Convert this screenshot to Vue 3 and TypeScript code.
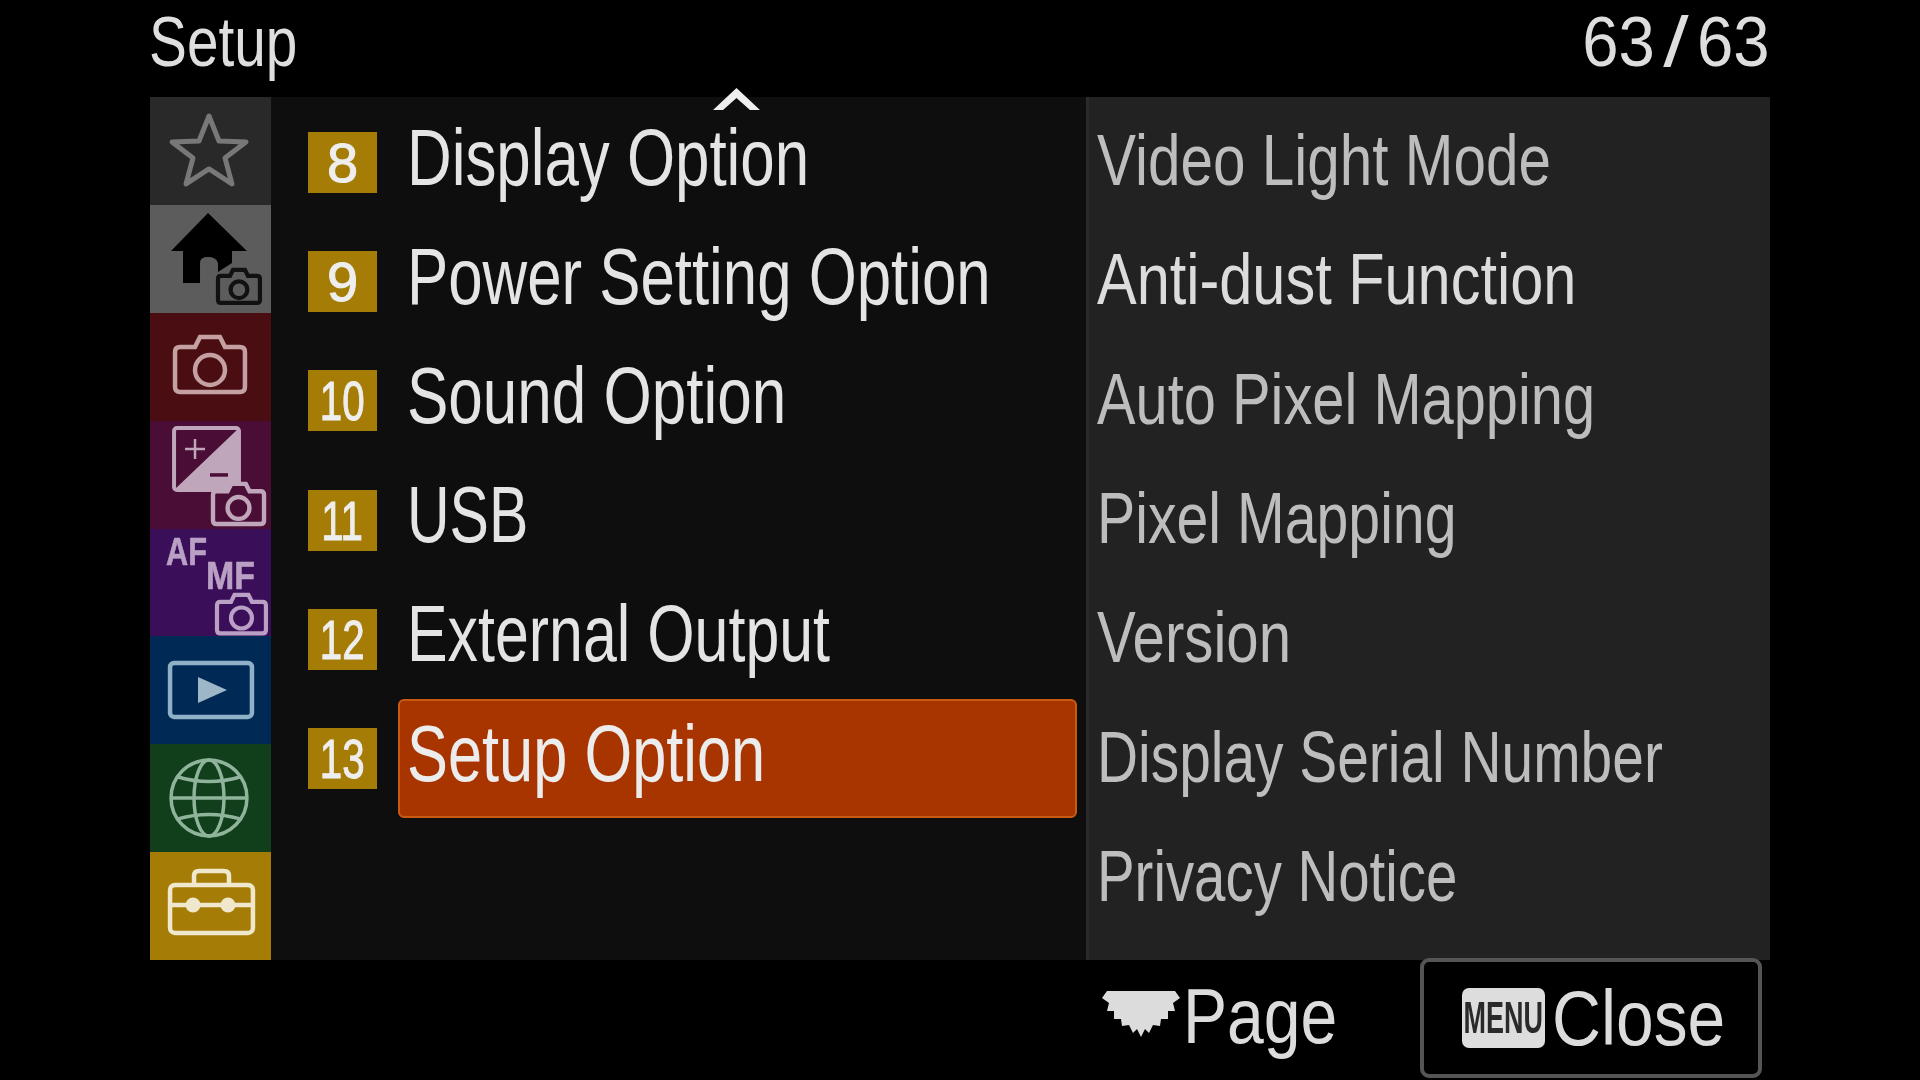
<script setup lang="ts">
interface Row { num: number; label: string; sx: number; active?: boolean }
const rows: Row[] = [
  { num: 8, label: 'Display Option', sx: 0.773 },
  { num: 9, label: 'Power Setting Option', sx: 0.772 },
  { num: 10, label: 'Sound Option', sx: 0.775 },
  { num: 11, label: 'USB', sx: 0.737 },
  { num: 12, label: 'External Output', sx: 0.761 },
  { num: 13, label: 'Setup Option', sx: 0.767, active: true },
]
const details: { label: string; sx: number; bright?: boolean }[] = [
  { label: 'Video Light Mode', sx: 0.812 },
  { label: 'Anti-dust Function', sx: 0.826, bright: true },
  { label: 'Auto Pixel Mapping', sx: 0.803 },
  { label: 'Pixel Mapping', sx: 0.795 },
  { label: 'Version', sx: 0.808 },
  { label: 'Display Serial Number', sx: 0.79 },
  { label: 'Privacy Notice', sx: 0.783 },
]
const cam = 'M5 10H20L25 0H45L50 10H65Q70 10 70 15V50Q70 55 65 55H5Q0 55 0 50V15Q0 10 5 10Z'
const squeeze = (sx: number) => ({ transform: `scaleX(${sx})` })
</script>

<template>
  <div class="screen">
    <header class="top">
      <span class="title">Setup</span>
      <span class="count">63<span class="slash">/</span>63</span>
    </header>

    <main class="panel">
      <nav class="rail">
        <div class="tab t-star">
          <svg viewBox="0 0 121 108">
            <polygon points="59,19 69,44 96,45 75,61 82,87 59,72 36,87 43,61 22,45 49,44" fill="none" stroke="#787878" stroke-width="5" stroke-linejoin="round" />
          </svg>
        </div>
        <div class="tab t-home">
          <svg viewBox="0 0 121 108">
            <path d="M58 8 97 46H82V58L68 67V58Q66 52 58 52 50 52 50 58V78H33V46H21Z" fill="#000" />
            <g transform="translate(68 65) scale(.6)" fill="none" stroke="#111" stroke-width="7">
              <path :d="cam" />
              <circle cx="35" cy="33" r="14" />
            </g>
          </svg>
        </div>
        <div class="tab t-shoot">
          <svg viewBox="0 0 121 108">
            <g transform="translate(25 24)" fill="none" stroke="#c4a0a2" stroke-width="4.500">
              <path :d="cam" />
              <circle cx="35" cy="33" r="15" />
            </g>
          </svg>
        </div>
        <div class="tab t-expo">
          <svg viewBox="0 0 121 108">
            <rect x="24" y="7" width="65" height="62" rx="3" fill="none" stroke="#c0a6ba" stroke-width="4" />
            <path d="M24 69 89 7V69Z" fill="#c0a6ba" />
            <path d="M45 18V38M35 28H55" stroke="#c0a6ba" stroke-width="2.5" />
            <path d="M60 54H78" stroke="#4a0e36" stroke-width="3.5" />
            <g transform="translate(63 63) scale(.73)" fill="#4a0e36" stroke="#c0a6ba" stroke-width="6">
              <path :d="cam" />
              <circle cx="35" cy="33" r="15" />
            </g>
          </svg>
        </div>
        <div class="tab t-focus">
          <svg viewBox="0 0 121 108">
            <text class="glyph-text" x="16" y="36" font-size="38" textLength="41" lengthAdjust="spacingAndGlyphs">AF</text>
            <text class="glyph-text" x="56" y="60" font-size="38" textLength="49" lengthAdjust="spacingAndGlyphs">MF</text>
            <g transform="translate(67 66) scale(.7)" fill="none" stroke="#b9a0c4" stroke-width="6">
              <path :d="cam" />
              <circle cx="35" cy="33" r="15" />
            </g>
          </svg>
        </div>
        <div class="tab t-play">
          <svg viewBox="0 0 121 108">
            <rect x="20" y="27" width="82" height="54" rx="4" fill="none" stroke="#8fb0c6" stroke-width="4.500" />
            <path d="M48 41 77 54 48 67Z" fill="#9db7c9" />
          </svg>
        </div>
        <div class="tab t-net">
          <svg viewBox="0 0 121 108">
            <g fill="none" stroke="#8fb39b" stroke-width="3.500">
              <circle cx="59" cy="54" r="38" />
              <ellipse cx="59" cy="54" rx="15" ry="38" />
              <path d="M21 54H97M28 33Q59 42 90 33M28 75Q59 66 90 75" />
            </g>
          </svg>
        </div>
        <div class="tab t-tools">
          <svg viewBox="0 0 121 108">
            <g fill="none" stroke="#f0e8cc" stroke-width="4.500">
              <rect x="20" y="33" width="83" height="48" rx="5" />
              <path d="M44 33V24Q44 19 49 19H74Q79 19 79 24V33M20 53H103" />
            </g>
            <circle cx="43" cy="53" r="7.500" fill="#f0e8cc" />
            <circle cx="78" cy="53" r="7.500" fill="#f0e8cc" />
          </svg>
        </div>
      </nav>

      <ul class="list">
        <li v-for="row in rows" :key="row.num" class="row">
          <span class="badge" :class="{ wide: row.num > 9 }"><span>{{ row.num }}</span></span>
          <span class="label" :class="{ active: row.active }"><span :style="squeeze(row.sx)">{{ row.label }}</span></span>
        </li>
      </ul>

      <ul class="detail">
        <li v-for="d in details" :key="d.label" :class="{ bright: d.bright }"><span :style="squeeze(d.sx)">{{ d.label }}</span></li>
      </ul>

      <svg class="caret" viewBox="0 0 47 22"><path d="M0 22 23.500 0 47 22H37L23.500 10 10 22Z" fill="#eee" /></svg>
    </main>

    <footer class="bottom">
      <div class="page">
        <svg class="dial" viewBox="0 0 78 46">
          <polygon points="73,0 78,7 71,12 73,20 66,20 66,28 59,28 58,35 51,34 47,42 43,38 39,46 35,38 31,42 27,34 20,35 19,28 12,28 12,20 5,20 7,12 0,7 5,0" fill="#dcdcdc" />
        </svg>
        <span class="foot-text"><span>Page</span></span>
      </div>
      <div class="close">
        <span class="menu"><span>MENU</span></span>
        <span class="foot-text close-text"><span>Close</span></span>
      </div>
    </footer>
  </div>
</template>

<style>
html, body { background: #000; }
</style>

<style scoped>
.screen {
  width: 1920px;
  height: 1080px;
  background: #000;
  display: flex;
  flex-direction: column;
  overflow: hidden;
  font-family: "Liberation Sans", Arial, sans-serif;
  filter: blur(0.6px);
}
ul { list-style: none; margin: 0; padding: 0; }

.top {
  height: 97px;
  flex: none;
  box-sizing: border-box;
  padding: 0 150px 15px 149px;
  display: flex;
  align-items: center;
  justify-content: space-between;
  font-size: 71px;
  color: #dedede;
  white-space: nowrap;
}
.title { display: inline-block; transform: scaleX(.8); transform-origin: left center; }
.count { display: inline-block; transform: scaleX(.92); transform-origin: right center; }
.slash { display: inline-block; margin: 0 13px; transform: scaleX(1.4); }

.panel {
  width: 1620px;
  height: 863px;
  flex: none;
  margin: 0 150px;
  display: flex;
  position: relative;
}
.rail { width: 121px; flex: none; display: flex; flex-direction: column; }
.tab { flex: 1; min-height: 0; }
.tab svg { display: block; width: 121px; height: 100%; }
.glyph-text {
  font-family: "Liberation Sans", Arial, sans-serif;
  font-weight: 700;
  fill: #b9a0c4;
  stroke: #b9a0c4;
  stroke-width: .6px;
}
.t-star { background: #292929; }
.t-home { background: #5c5c5c; }
.t-shoot { background: #4a0e12; }
.t-expo { background: #4a0e36; }
.t-focus { background: #3a0e58; }
.t-play { background: #002a55; }
.t-net { background: #123f1b; }
.t-tools { background: #a57d06; }

.list {
  width: 815px;
  flex: none;
  box-sizing: border-box;
  background: #0e0e0e;
  padding-top: 6px;
}
.row { height: 119.2px; display: flex; align-items: center; }
.badge {
  width: 69px;
  height: 61px;
  flex: none;
  margin-left: 37px;
  background: #a57d06;
  display: flex;
  align-items: center;
  justify-content: center;
  color: #eee;
  font-size: 56px;
  -webkit-text-stroke: 1px #eee;
  overflow: hidden;
}
.badge span { display: inline-block; }
.badge.wide span { transform: scaleX(.72); }
.label {
  width: 679px;
  height: 119px;
  flex: none;
  margin-left: 21px;
  box-sizing: border-box;
  border: 2px solid transparent;
  border-radius: 6px;
  padding: 0 0 10px 7px;
  display: flex;
  align-items: center;
  color: #e4e4e4;
  font-size: 80px;
  white-space: nowrap;
}
.label span { display: inline-block; transform-origin: left center; }
.label.active { background: #a83400; border-color: #c95a12; color: #ececec; }

.detail {
  width: 684px;
  flex: none;
  box-sizing: border-box;
  background: #222;
  border-left: 3px solid #2b2b2b;
  padding-top: 3.500px;
  font-size: 72px;
  color: #bdbdbd;
  white-space: nowrap;
}
.detail li {
  height: 119.3px;
  padding-left: 8px;
  display: flex;
  align-items: center;
}
.detail span { display: inline-block; transform-origin: left center; }
.detail li.bright { color: #dcdcdc; }

.caret { position: absolute; left: 563px; top: -9px; width: 47px; height: 22px; }

.bottom {
  height: 122px;
  flex: none;
  margin-top: -2px;
  padding-right: 158px;
  display: flex;
  justify-content: flex-end;
  align-items: flex-start;
  position: relative;
}
.page {
  height: 116px;
  display: flex;
  align-items: center;
  margin-right: 87px;
}
.dial { width: 78px; height: 46px; flex: none; margin-right: 3px; margin-top: -4px; }
.foot-text {
  width: 150px;
  font-size: 77px;
  color: #dcdcdc;
  white-space: nowrap;
}
.foot-text span { display: inline-block; transform: scaleX(.858); transform-origin: left center; }
.close {
  width: 342px;
  height: 120px;
  box-sizing: border-box;
  border: 4px solid #555;
  border-radius: 9px;
  padding-left: 38px;
  display: flex;
  align-items: center;
  background: #000;
}
.menu {
  width: 83px;
  height: 60px;
  flex: none;
  border-radius: 7px;
  background: #ddd;
  color: #2a2a2a;
  font-size: 45px;
  font-weight: 700;
  display: flex;
  align-items: center;
  justify-content: center;
  overflow: hidden;
}
.menu span { display: inline-block; transform: scaleX(.6); }
.close-text { margin-left: 7px; }
.close-text span { transform: scaleX(.88); }
</style>
